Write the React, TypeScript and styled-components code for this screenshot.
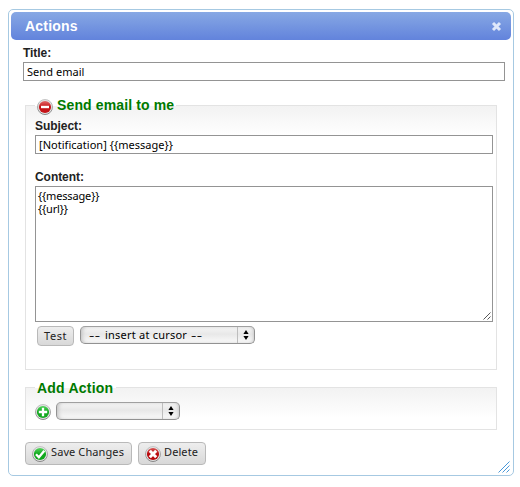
import React from "react";
import styled, { createGlobalStyle } from "styled-components";

const Global = createGlobalStyle`
  * { box-sizing: border-box; }
  body { margin: 0; background: #fff; font-family: "Liberation Sans", Arial, sans-serif; color: #222; }
`;

const Dialog = styled.section`
  position: relative;
  width: 506px;
  height: 467px;
  margin: 9px 0 0 8px;
  padding: 2px;
  border: 1px solid #a6c9e2;
  border-radius: 5px;
  background: #fff;
`;

const TitleBar = styled.header`
  display: flex;
  align-items: center;
  justify-content: space-between;
  height: 28px;
  padding: 0 9px 0 14px;
  border-radius: 5px;
  background: linear-gradient(#87a8e4, #6283dc);
`;

const Heading = styled.h1`
  margin: 0;
  font-size: 14px;
  line-height: 28px;
  letter-spacing: 0.2px;
  color: #fff;
`;

const CloseButton = styled.button`
  display: flex;
  padding: 0;
  border: 0;
  background: none;
`;

const Body = styled.div`
  padding: 6px 6px 0 12px;
`;

const Label = styled.label`
  display: block;
  height: 16px;
  font-size: 12px;
  font-weight: bold;
  line-height: 14px;
  letter-spacing: -0.05px;
`;

const fieldFont = `
  font-family: "Noto Sans", sans-serif;
  font-size: 11px;
  color: #000;
`;

const TextInput = styled.input<{ $spacing: number }>`
  display: block;
  width: 100%;
  height: 19px;
  padding: 0 3px 1px;
  border: 1px solid #949494;
  border-radius: 0;
  outline: 0;
  background: #fff;
  ${fieldFont}
  letter-spacing: ${(p) => p.$spacing}px;
`;

const Panel = styled.section<{ $height: number; $top: number }>`
  width: 472px;
  height: ${(p) => p.$height}px;
  margin: ${(p) => p.$top}px 0 0 2px;
  padding: 0 3px 0 9px;
  border: 1px solid #e3e3e3;
  background: linear-gradient(#f2f2f2, #fff 30px);
`;

const Legend = styled.h2<{ $width: number; $spacing: number; $drop?: number }>`
  display: flex;
  gap: 4px;
  width: ${(p) => p.$width}px;
  height: 17px;
  margin: -9px 0 0;
  padding-left: 2px;
  background: linear-gradient(#fff, #fff) top / 100% 9px no-repeat;
  font-size: 14px;
  line-height: ${(p) => 17 + 2 * (p.$drop ?? 0)}px;
  letter-spacing: ${(p) => p.$spacing}px;
  white-space: nowrap;
  color: #007a00;
`;

const LegendIcon = styled.span`
  display: flex;
  padding-top: 2px;
`;

const SubjectField = styled.div`
  padding-top: 5px;
  height: 56px;
`;

const ContentField = styled.div`
  height: 152px;
`;

const TextAreaFrame = styled.div`
  position: relative;
`;

const TextArea = styled.textarea`
  display: block;
  width: 100%;
  height: 136px;
  padding: 2px;
  border: 1px solid #949494;
  outline: 0;
  resize: none;
  background: #fff;
  ${fieldFont}
  line-height: 13px;
  letter-spacing: -0.15px;
`;

const Grip = styled.svg<{ $right: number; $bottom: number }>`
  position: absolute;
  right: ${(p) => p.$right}px;
  bottom: ${(p) => p.$bottom}px;
`;

const Tools = styled.div`
  display: flex;
  align-items: flex-start;
  gap: 6px;
  padding: 4px 0 0 2px;
`;

const Button = styled.button<{ $width: number; $height: number; $spacing: number }>`
  display: flex;
  align-items: center;
  gap: 3px;
  width: ${(p) => p.$width}px;
  height: ${(p) => p.$height}px;
  padding: 0 0 0 6px;
  border: 1px solid #b9b9b9;
  border-radius: 4px;
  background: linear-gradient(#eee, #d8d8d8);
  font-family: "Noto Sans", sans-serif;
  font-size: 11px;
  line-height: 16px;
  letter-spacing: ${(p) => p.$spacing}px;
  white-space: nowrap;
  color: #222;
`;

const Caption = styled.span`
  padding-bottom: 3px;
`;

const Select = styled.div<{ $width: number }>`
  display: flex;
  justify-content: space-between;
  width: ${(p) => p.$width}px;
  height: 18px;
  padding-left: 8px;
  border: 1px solid #929292;
  border-top-color: #a0a0a0;
  border-radius: 5px;
  background: linear-gradient(#f5f5f5, #e8e8e8 45%, #fafafa);
  box-shadow: inset 3px 0 4px -2px #bbb, inset -2px 0 3px -1px #ccc;
  ${fieldFont}
  line-height: 16px;
  letter-spacing: 0.22px;
`;

const Dashes = styled.span`
  display: inline-block;
  width: 12px;
  transform: scaleX(1.5);
  transform-origin: left;
`;

const Choice = styled.span`
  display: flex;
  gap: 4px;
`;

const Arrows = styled.span`
  display: flex;
  align-items: center;
  justify-content: center;
  width: 17px;
  border-left: 1px solid #bdbdbd;
`;

const AddRow = styled.div`
  display: flex;
  gap: 5px;
  padding-top: 6px;
`;

const AddIcon = styled.span`
  display: flex;
  padding-top: 2px;
`;

const Actions = styled.footer`
  display: flex;
  gap: 6px;
  padding: 12px 0 0 2px;
`;

const marks = {
  minus: { top: "#e26a6a", bottom: "#c51418", path: "M4 8h8", width: 2.4 },
  plus: { top: "#4fd45a", bottom: "#12a81f", path: "M8 3.8v8.4M3.8 8h8.4", width: 2.3 },
  check: { top: "#56d65e", bottom: "#10a81d", path: "M4 8.2l2.9 3.1 5.4-6.5", width: 2.3 },
  cross: { top: "#d95252", bottom: "#b8090d", path: "M4.8 4.8l6.4 6.4M11.2 4.8l-6.4 6.4", width: 3 },
};

function RoundIcon({ kind }: { kind: keyof typeof marks }) {
  const m = marks[kind];
  return (
    <svg width="16" height="16" viewBox="0 0 16 16">
      <defs>
        <linearGradient id={kind} x2="0" y2="1">
          <stop stopColor={m.top} />
          <stop offset="0.5" stopColor={m.bottom} />
          <stop offset="1" stopColor={m.bottom} />
        </linearGradient>
        <linearGradient id={`${kind}-rim`} x2="0" y2="1">
          <stop stopColor="#c6c6c6" />
          <stop offset="1" stopColor="#858585" />
        </linearGradient>
      </defs>
      <circle cx="8" cy="8" r="7.5" fill="#e2e2e2" stroke={`url(#${kind}-rim)`} />
      <circle cx="8" cy="8" r="6.1" fill={`url(#${kind})`} />
      <path d={m.path} fill="none" stroke="#fff" strokeWidth={m.width} />
    </svg>
  );
}

function SelectArrows() {
  return (
    <Arrows>
      <svg width="6" height="10" viewBox="0 0 6 10">
        <path d="M3 0l2.6 4H.4zM3 10l2.6-4H.4z" fill="#000" />
      </svg>
    </Arrows>
  );
}

export default function App() {
  return (
    <>
      <Global />
      <Dialog>
        <TitleBar>
          <Heading>Actions</Heading>
          <CloseButton aria-label="Close">
            <svg width="11" height="11" viewBox="0 0 11 11">
              <path d="M2 2l7 7M9 2L2 9" stroke="#dfe8fa" strokeWidth="3" />
            </svg>
          </CloseButton>
        </TitleBar>
        <Body>
          <Label>Title:</Label>
          <TextInput $spacing={0.05} defaultValue="Send email" />
          <Panel $height={265} $top={24}>
            <Legend $width={141} $spacing={0.13}>
              <LegendIcon><RoundIcon kind="minus" /></LegendIcon>
              Send email to me
            </Legend>
            <SubjectField>
              <Label>Subject:</Label>
              <TextInput $spacing={0.03} defaultValue="[Notification] {{message}}" />
            </SubjectField>
            <ContentField>
              <Label>Content:</Label>
              <TextAreaFrame>
                <TextArea defaultValue={"{{message}}\n{{url}}"} />
                <Grip $right={2} $bottom={2} width="8" height="8" viewBox="0 0 8 8">
                  <path d="M.5 7.5l7-7M4.5 7.5l3-3" stroke="#444" strokeWidth=".9" />
                </Grip>
              </TextAreaFrame>
            </ContentField>
            <Tools>
              <Button $width={37} $height={20} $spacing={0.55}>Test</Button>
              <Select $width={175}>
                <Choice>
                  <Dashes>--</Dashes>
                  <span>insert at cursor</span>
                  <Dashes>--</Dashes>
                </Choice>
                <SelectArrows />
              </Select>
            </Tools>
          </Panel>
          <Panel $height={43} $top={17}>
            <Legend $width={81} $spacing={0.22} $drop={1}>Add Action</Legend>
            <AddRow>
              <AddIcon><RoundIcon kind="plus" /></AddIcon>
              <Select $width={124}>
                <span />
                <SelectArrows />
              </Select>
            </AddRow>
          </Panel>
          <Actions>
            <Button $width={107} $height={23} $spacing={0.1}>
              <RoundIcon kind="check" />
              <Caption>Save Changes</Caption>
            </Button>
            <Button $width={68} $height={23} $spacing={0.1}>
              <RoundIcon kind="cross" />
              <Caption>Delete</Caption>
            </Button>
          </Actions>
        </Body>
        <Grip $right={3} $bottom={2} width="12" height="12" viewBox="0 0 12 12">
          <path d="M.5 11.5l11-11M4.5 11.5l7-7M8.5 11.5l3-3" stroke="#4a98d8" strokeWidth="1" />
        </Grip>
      </Dialog>
    </>
  );
}
